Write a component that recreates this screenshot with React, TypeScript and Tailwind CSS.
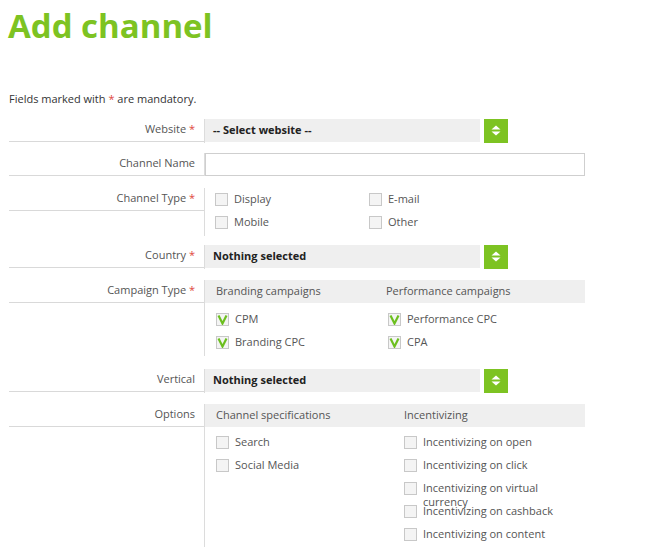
import React from 'react';

const Req = () => <span className="text-[#e0463c]"> *</span>;

function Label({ text, req }: { text: string; req?: boolean }) {
  return (
    <div className="w-[195px] shrink-0 self-start h-[23px] border-b border-[#d9d9d9] flex items-center justify-end pr-[9px] text-[#555]">
      <span>
        {text}
        {req && <Req />}
      </span>
    </div>
  );
}

function Box({ checked }: { checked?: boolean }) {
  return (
    <span className="w-[13px] h-[13px] shrink-0 border border-[#c8c8c8] bg-[#f4f4f4] flex items-center justify-center">
      {checked && (
        <svg width="11" height="11" viewBox="0 0 11 11">
          <path d="M1.5 1.5 L5.5 9.5 L9.5 1.5" fill="none" stroke="#6cbf1f" strokeWidth="2.2" strokeLinejoin="miter" />
        </svg>
      )}
    </span>
  );
}

function Check({ text, checked }: { text: string; checked?: boolean }) {
  return (
    <div className="h-[23px] flex items-start pt-[4px] gap-[6px]">
      <span className="mt-[1px]">
        <Box checked={checked} />
      </span>
      <span className="leading-[14px] w-[150px] text-[#555]">{text}</span>
    </div>
  );
}

function SelectField({ text }: { text: string }) {
  return (
    <div className="flex items-center gap-[4px]">
      <div className="w-[275px] h-[23px] bg-[#efefef] flex items-center pl-[8px] font-bold text-[#222]">{text}</div>
      <div className="w-[24px] h-[24px] bg-[#7dc322] flex flex-col items-center justify-center">
        <svg width="10" height="11" viewBox="0 0 10 11">
          <path d="M0.5 4.5 L5 0.5 L9.5 4.5 Z" fill="#fff" />
          <path d="M0.5 6.5 L5 10.5 L9.5 6.5 Z" fill="#fff" />
        </svg>
      </div>
    </div>
  );
}

export default function App() {
  return (
    <div className="w-[663px] h-[547px] overflow-hidden bg-white text-[11px] text-[#444]" style={{ fontFamily: '"Open Sans", Arial, sans-serif' }}>
      <h1 className="ml-[8px] pt-[2px] text-[33px] leading-[48px] font-bold text-[#7dc322]">Add channel</h1>

      <p className="ml-[9px] mt-[41px] text-[11px] text-[#333]">
        Fields marked with <span className="text-[#e0463c]">*</span> are mandatory.
      </p>

      <div className="ml-[9px] w-[576px] mt-[11px] flex flex-col">
        {/* Website */}
        <div className="flex items-center h-[24px]">
          <Label text="Website" req />
          <div className="border-l border-[#dcdcdc] h-[24px] flex items-center">
            <SelectField text="-- Select website --" />
          </div>
        </div>

        {/* Channel name */}
        <div className="flex mt-[10px]">
          <Label text="Channel Name" />
          <div className="border-l border-[#dcdcdc]">
            <input className="block w-[380px] h-[23px] border border-[#cfcfcf] outline-none px-2" />
          </div>
        </div>

        {/* Channel type */}
        <div className="flex mt-[12px]">
          <Label text="Channel Type" req />
          <div className="border-l border-[#dcdcdc] pl-[10px] pb-[2px] grid grid-cols-[154px_150px]">
            <Check text="Display" />
            <Check text="E-mail" />
            <Check text="Mobile" />
            <Check text="Other" />
          </div>
        </div>

        {/* Country */}
        <div className="flex items-center h-[24px] mt-[9px]">
          <Label text="Country" req />
          <div className="border-l border-[#dcdcdc] h-[24px] flex items-center">
            <SelectField text="Nothing selected" />
          </div>
        </div>

        {/* Campaign type */}
        <div className="flex mt-[11px]">
          <Label text="Campaign Type" req />
          <div className="border-l border-[#dcdcdc] flex-1 pb-[2px]">
            <div className="h-[23px] bg-[#efefef] flex items-center pl-[11px] text-[#555]">
              <span className="w-[170px]">Branding campaigns</span>
              <span>Performance campaigns</span>
            </div>
            <div className="pl-[11px] pt-[5px] grid grid-cols-[172px_170px]">
              <Check text="CPM" checked />
              <Check text="Performance CPC" checked />
              <Check text="Branding CPC" checked />
              <Check text="CPA" checked />
            </div>
          </div>
        </div>

        {/* Vertical */}
        <div className="flex items-center h-[24px] mt-[13px]">
          <Label text="Vertical" />
          <div className="border-l border-[#dcdcdc] h-[24px] flex items-center">
            <SelectField text="Nothing selected" />
          </div>
        </div>

        {/* Options */}
        <div className="flex mt-[11px]">
          <Label text="Options" />
          <div className="border-l border-[#dcdcdc] flex-1 pb-[40px]">
            <div className="h-[23px] bg-[#efefef] flex items-center pl-[11px] text-[#555]">
              <span className="w-[188px]">Channel specifications</span>
              <span>Incentivizing</span>
            </div>
            <div className="pl-[11px] pt-[4px] flex">
              <div className="w-[188px]">
                <Check text="Search" />
                <Check text="Social Media" />
              </div>
              <div>
                <Check text="Incentivizing on open" />
                <Check text="Incentivizing on click" />
                <Check text="Incentivizing on virtual currency" />
                <Check text="Incentivizing on cashback" />
                <Check text="Incentivizing on content" />
              </div>
            </div>
          </div>
        </div>
      </div>
    </div>
  );
}
